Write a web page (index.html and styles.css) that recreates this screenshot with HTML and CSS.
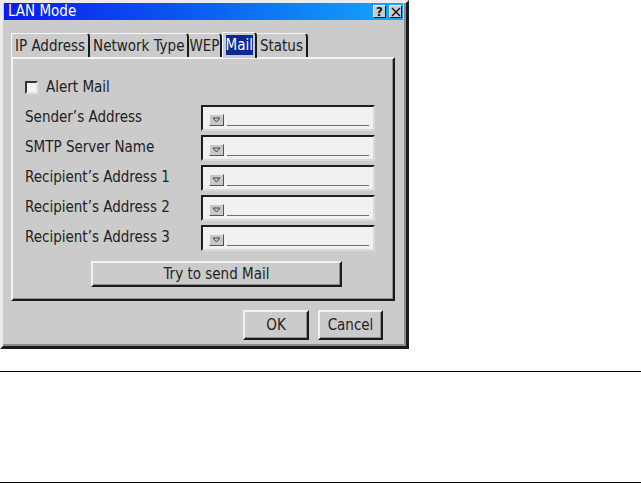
FILE: index.html
```html
<!DOCTYPE html>
<html lang="en">
<head>
    <meta charset="UTF-8">
    <title>LAN Mode</title>
    <link rel="stylesheet" href="styles.css">
</head>
<body>
    <div class="dialog">
        <div class="titlebar">
            <span class="title">LAN Mode</span>
            <div class="title-buttons">
                <span class="tbtn">?</span>
                <span class="tbtn">
                    <svg width="10" height="10" viewBox="0 0 10 10"><path d="M1 1 L9 9 M9 1 L1 9" stroke="#111" stroke-width="1.4"/></svg>
                </span>
            </div>
        </div>

        <div class="tabs">
            <div class="tab first">IP Address</div>
            <div class="tab">Network Type</div>
            <div class="tab tab-tight">WEP</div>
            <div class="tab active"><span class="sel">Mail</span></div>
            <div class="tab">Status</div>
        </div>

        <div class="panel">
            <div class="check-row">
                <span class="checkbox"></span>
                <span>Alert Mail</span>
            </div>

            <div class="fields">
                <div class="field-label">Sender’s Address</div>
                <div class="field"><span class="drop"><svg width="9" height="6" viewBox="0 0 9 6"><path d="M1 1 H8 L4.5 5 Z" fill="none" stroke="#444"/></svg></span><span class="line"></span></div>

                <div class="field-label">SMTP Server Name</div>
                <div class="field"><span class="drop"><svg width="9" height="6" viewBox="0 0 9 6"><path d="M1 1 H8 L4.5 5 Z" fill="none" stroke="#444"/></svg></span><span class="line"></span></div>

                <div class="field-label">Recipient’s Address 1</div>
                <div class="field"><span class="drop"><svg width="9" height="6" viewBox="0 0 9 6"><path d="M1 1 H8 L4.5 5 Z" fill="none" stroke="#444"/></svg></span><span class="line"></span></div>

                <div class="field-label">Recipient’s Address 2</div>
                <div class="field"><span class="drop"><svg width="9" height="6" viewBox="0 0 9 6"><path d="M1 1 H8 L4.5 5 Z" fill="none" stroke="#444"/></svg></span><span class="line"></span></div>

                <div class="field-label">Recipient’s Address 3</div>
                <div class="field"><span class="drop"><svg width="9" height="6" viewBox="0 0 9 6"><path d="M1 1 H8 L4.5 5 Z" fill="none" stroke="#444"/></svg></span><span class="line"></span></div>
            </div>

            <button type="button" class="btn btn-send">Try to send Mail</button>
        </div>

        <div class="footer">
            <button type="button" class="btn btn-ok">OK</button>
            <button type="button" class="btn btn-cancel">Cancel</button>
        </div>
    </div>

    <div class="rule rule-top"></div>
    <div class="rule rule-bottom"></div>
</body>
</html>
```

FILE: styles.css
```css
* {
    margin: 0;
    padding: 0;
    box-sizing: border-box;
}

body {
    background: #fff;
    font-family: 'DejaVu Sans Condensed', 'DejaVu Sans', sans-serif;
    font-stretch: condensed;
    font-size: 15px;
    color: #222;
}

.dialog {
    width: 409px;
    height: 349px;
    background: #cbcbcb;
    border: 3px solid;
    border-color: #ececec #1a1a1a #1a1a1a #ececec;
    box-shadow: inset -2px -2px #8c8c8c;
    padding: 0 3px 0 1px;
}

.titlebar {
    height: 17px;
    background: linear-gradient(to right, #0a1cee 0%, #0c5ef2 50%, #14a8f8 100%);
    display: flex;
    align-items: center;
    justify-content: space-between;
    padding: 0 1px 0 4px;
}

.title {
    color: #fff;
    line-height: 17px;
}

.title-buttons {
    display: flex;
    gap: 3px;
}

.tbtn {
    width: 13px;
    height: 13px;
    background: #cbcbcb;
    border: 1px solid;
    border-color: #f4f4f4 #202020 #202020 #f4f4f4;
    display: flex;
    align-items: center;
    justify-content: center;
    font-size: 13px;
    font-weight: bold;
    line-height: 1;
    color: #111;
}

.tabs {
    display: flex;
    align-items: flex-end;
    margin: 12px 0 0 7px;
    height: 25px;
}

.tab {
    height: 24px;
    padding: 0 3px;
    border-top: 1px solid #f6f6f6;
    border-right: 2px solid #1a1a1a;
    border-top-right-radius: 4px;
    line-height: 24px;
    white-space: nowrap;
}

.tab.first {
    border-left: 1px solid #f6f6f6;
    padding-left: 3px;
}

.tab.tab-tight {
    padding: 0;
}

.tab.active {
    height: 26px;
    border-left: 1px solid #f6f6f6;
    padding: 0 2px 0 3px;
    position: relative;
    margin-bottom: -1px;
    background: #cbcbcb;
    line-height: 25px;
}

.sel {
    background: #0b2a96;
    color: #fff;
    padding: 1px 0;
}

.panel {
    width: 384px;
    height: 244px;
    margin-left: 7px;
    border: 2px solid;
    border-color: #f4f4f4 #1a1a1a #1a1a1a #f4f4f4;
    box-shadow: inset -1px -1px #8c8c8c;
    padding: 22px 0 0 12px;
}

.check-row {
    display: flex;
    align-items: center;
    gap: 8px;
    height: 12px;
    margin-bottom: 12px;
}

.checkbox {
    width: 13px;
    height: 13px;
    background: #f4f4f4;
    border: 2px solid;
    border-color: #333 #e4e4e4 #e4e4e4 #333;
}

.fields {
    display: grid;
    grid-template-columns: 176px 174px;
    grid-auto-rows: 26px;
    row-gap: 4px;
    align-items: center;
}

.field-label {
    margin-top: -3px;
}

.field {
    height: 26px;
    background: #f1f1f1;
    border: 2px solid;
    border-color: #1e1e1e #dadada #dadada #1e1e1e;
    display: flex;
    align-items: flex-end;
    padding: 0 4px 3px 6px;
}

.drop {
    width: 15px;
    height: 12px;
    background: #c8c8c8;
    border: 1px solid;
    border-color: #f0f0f0 #555 #555 #f0f0f0;
    display: flex;
    align-items: center;
    justify-content: center;
}

.line {
    flex: 1;
    height: 1px;
    background: #6e6e6e;
    margin-left: 3px;
}

.btn {
    font: inherit;
    color: inherit;
    background: #cbcbcb;
    border: 2px solid;
    border-color: #f2f2f2 #1a1a1a #1a1a1a #f2f2f2;
    box-shadow: inset -1px -1px #8c8c8c;
    cursor: pointer;
}

.btn-send {
    width: 251px;
    height: 26px;
    margin: 10px 0 0 66px;
}

.footer {
    display: flex;
    justify-content: flex-end;
    gap: 9px;
    margin-top: 9px;
    padding-right: 20px;
}

.btn-ok {
    width: 66px;
    height: 30px;
}

.btn-cancel {
    width: 65px;
    height: 30px;
}

.rule {
    height: 1px;
    background: #000;
}

.rule-top {
    margin-top: 22px;
}

.rule-bottom {
    margin-top: 110px;
}
```
